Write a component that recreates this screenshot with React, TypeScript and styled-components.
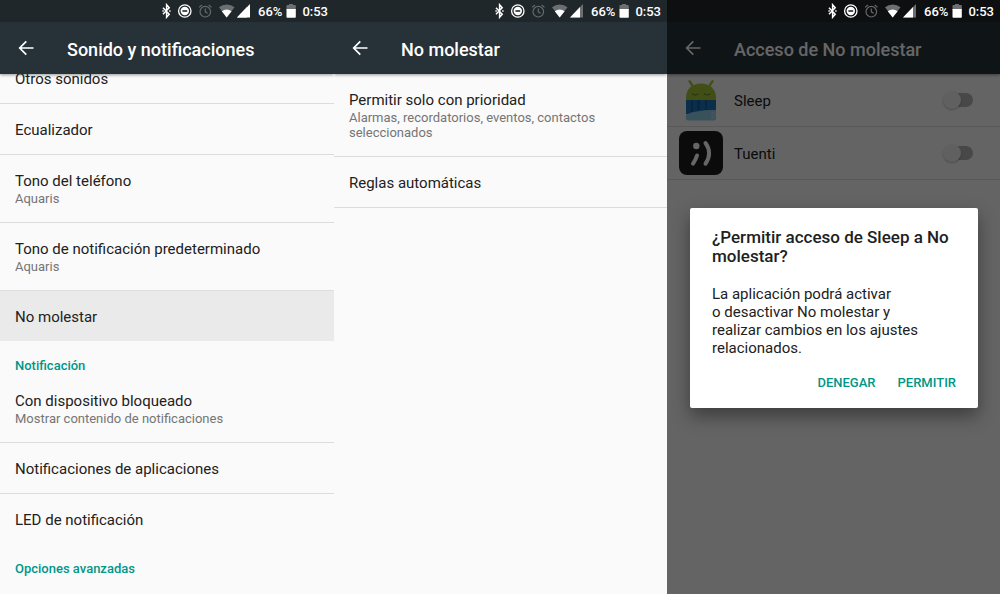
import React from "react";
import styled, { createGlobalStyle } from "styled-components";

const teal = "#009688";

const GlobalStyle = createGlobalStyle`
  *, *::before, *::after { box-sizing: border-box; }
  html, body, #root { height: 100%; }
  body {
    margin: 0;
    background: #fafafa;
    color: #212121;
    font-family: Roboto, "Liberation Sans", sans-serif;
  }
  button { font: inherit; color: inherit; border: 0; background: none; padding: 0; cursor: pointer; }
  h1, h2, p { margin: 0; padding: 0; }
`;

const Screens = styled.main`
  display: grid;
  grid-template-columns: 334fr 333fr 333fr;
  height: 100vh;
  overflow: hidden;
`;

const Phone = styled.section`
  position: relative;
  display: flex;
  flex-direction: column;
  min-width: 0;
  min-height: 0;
  overflow: hidden;
  background: #fafafa;
`;

const StatusBar = styled.div<{ $dim?: boolean }>`
  position: relative;
  z-index: 3;
  display: flex;
  flex: none;
  align-items: center;
  justify-content: flex-end;
  height: 22px;
  padding-right: 6px;
  background: ${(p) => (p.$dim ? "#0d0f11" : "#20272b")};
  color: #fff;
  font-size: 13px;
  font-weight: 500;
  line-height: 22px;

  svg { display: block; flex: none; }
`;

const StatusIcons = styled.span`
  display: flex;
  align-items: center;
  margin-right: 8px;
`;

const StatusText = styled.span`
  padding-top: 2px;
`;

const Battery = styled.svg`
  margin: 0 6px 0 4px;
`;

const AppBar = styled.header`
  position: relative;
  z-index: 1;
  display: flex;
  flex: none;
  align-items: center;
  height: 52px;
  padding: 4px 0 0 17px;
  background: #263238;
  color: #fff;
  box-shadow: 0 1px 3px rgba(0, 0, 0, 0.4);
`;

const BackButton = styled.button`
  display: flex;
  width: 18px;
  height: 18px;
  margin: 0 32px 4px 0;
`;

const Title = styled.h1`
  font-size: 18px;
  font-weight: 500;
  line-height: 24px;
  white-space: nowrap;
`;

const List = styled.div<{ $scrolled?: boolean }>`
  flex: 1;
  min-height: 0;
  margin-top: ${(p) => (p.$scrolled ? "-21px" : "0")};
`;

const Row = styled.button<{ $pressed?: boolean; $last?: boolean }>`
  display: block;
  width: 100%;
  padding: 16px 15px 14px;
  text-align: left;
  background: ${(p) => (p.$pressed ? "#eaeaea" : "transparent")};
  border-bottom: ${(p) => (p.$last ? "0" : "1px solid #dcdcdc")};
`;

const RowTitle = styled.span`
  display: block;
  font-size: 15px;
  line-height: 20px;
`;

const RowSummary = styled.span`
  display: block;
  padding-bottom: 2px;
  font-size: 13px;
  line-height: 15px;
  color: #757575;
`;

const Category = styled.h2`
  padding: 16px 15px 0;
  font-size: 13px;
  font-weight: 500;
  line-height: 18px;
  color: ${teal};
`;

const AppRow = styled.label`
  display: flex;
  align-items: center;
  height: 53px;
  padding: 2px 27px 0 12px;
  border-bottom: 1px solid #dcdcdc;
  font-size: 15px;
  line-height: 20px;

  svg { margin-bottom: 2px; }
`;

const AppName = styled.span`
  flex: 1;
  padding-left: 11px;
`;

const Switch = styled.input`
  position: relative;
  appearance: none;
  flex: none;
  width: 28px;
  height: 14px;
  margin: 0 0 2px;
  border-radius: 7px;
  background: #b4b4b4;

  &::before {
    content: "";
    position: absolute;
    top: -2px;
    left: -2px;
    width: 18px;
    height: 18px;
    border-radius: 50%;
    background: #f1f1f1;
    box-shadow: 0 1px 2px rgba(0, 0, 0, 0.25);
  }
`;

const Scrim = styled.div`
  position: absolute;
  inset: 0;
  z-index: 2;
  display: flex;
  align-items: center;
  padding: 22px 22px 0 23px;
  background: rgba(0, 0, 0, 0.6);
`;

const Dialog = styled.div`
  width: 100%;
  padding: 20px 22px 14px;
  border-radius: 2px;
  background: #fff;
  box-shadow: 0 8px 18px rgba(0, 0, 0, 0.4);
`;

const DialogTitle = styled.h2`
  font-size: 17px;
  font-weight: 500;
  line-height: 19px;
`;

const DialogText = styled.p`
  margin: 19px 20px 0 0;
  font-size: 15px;
  line-height: 18px;
`;

const Actions = styled.div`
  display: flex;
  justify-content: flex-end;
  gap: 22px;
  margin-top: 15px;
`;

const ActionButton = styled.button`
  font-size: 13px;
  font-weight: 500;
  line-height: 22px;
  color: ${teal};
`;

function Status({ dim, weakSignal }: { dim?: boolean; weakSignal?: boolean }) {
  return (
    <StatusBar $dim={dim}>
      <StatusIcons>
        <svg width="88" height="16" viewBox="0 0 88 16" fill="none" aria-hidden="true">
          <path d="M1 4.800 7.200 11.200 4.600 14.200V1.800L7.200 4.800 1 11.200" stroke="#fff" strokeWidth="1.500" />
          <path d="M.4 8h1.400M7.200 8h1.400" stroke="#fff" strokeWidth="1.600" />
          <circle cx="22.800" cy="8" r="6.200" stroke="#fff" strokeWidth="1.300" />
          <circle cx="22.800" cy="8" r="4.200" fill="#fff" />
          <path d="M20.400 8h4.800" stroke="#20272b" strokeWidth="1.600" />
          <g stroke="#63696d" strokeWidth="1.200">
            <circle cx="43.300" cy="8.700" r="5.300" />
            <path d="M43.300 5.500v3.300l2.300 1.400M37.100 4.400l2.800-2.400M49.500 4.400l-2.800-2.400" />
          </g>
          <path d="M57 4.200a12.600 12.600 0 0 1 15.500 0L64.700 14.500z" fill="#6b6f72" />
          <path d="M59.800 8.300a8 8 0 0 1 9.800 0L64.700 14.500z" fill="#fff" />
          <path d="M88 1v13.500H75z" fill={weakSignal ? "#6b6f72" : "#fff"} />
          <path d="M85 4.100v10.400H75z" fill="#fff" />
        </svg>
      </StatusIcons>
      <StatusText>66%</StatusText>
      <Battery width="10" height="14" viewBox="0 0 10 14" aria-hidden="true">
        <path d="M3 0h4v1h2a.8.8 0 0 1 .8.8V6H.5V1.800A.8.8 0 0 1 1.300 1H3z" fill="#6b6f72" />
        <path d="M.5 5h9.300v8a.8.8 0 0 1-.8.8H1.300A.8.8 0 0 1 .5 13z" fill="#fff" />
      </Battery>
      <StatusText>0:53</StatusText>
    </StatusBar>
  );
}

function Bar({ title }: { title: string }) {
  return (
    <AppBar>
      <BackButton type="button" aria-label="Atrás">
        <svg width="18" height="18" viewBox="0 0 18 18" fill="none" stroke="#fff" strokeWidth="1.700">
          <path d="M16.500 9H3M9.300 2.400 2.700 9l6.600 6.600" />
        </svg>
      </BackButton>
      <Title>{title}</Title>
    </AppBar>
  );
}

interface ItemProps {
  title: string;
  summary?: string;
  pressed?: boolean;
  last?: boolean;
}

function Item({ title, summary, pressed, last }: ItemProps) {
  return (
    <Row type="button" $pressed={pressed} $last={last}>
      <RowTitle>{title}</RowTitle>
      {summary && <RowSummary>{summary}</RowSummary>}
    </Row>
  );
}

function SleepIcon() {
  return (
    <svg width="44" height="44" viewBox="0 -1 44 44" fill="none" aria-hidden="true">
      <path d="M10.500 2.200 14 7.500M33.500 2.200 30 7.500" stroke="#a4c639" strokeWidth="2.400" strokeLinecap="round" />
      <path d="M7 22v-3.500C7 10 13.500 4.500 22 4.500S37 10 37 18.500V22z" fill="#a4c639" />
      <path d="M13 14.500c1.500 2 5 2 6.500 0M25 14.500c1.500 2 5 2 6.500 0" stroke="#5e7a1c" strokeWidth="1.200" />
      <path d="M7 21h30v14H7z" fill="#1c75bc" />
      <path d="M12 21h2v12h-2zM18 21h3v10h-3zM26 21h2v10h-2z" fill="#15609f" />
      <path d="M7 35.500c8-3.500 19-5 30-4.500v8.500a2 2 0 0 1-2 2H9a2 2 0 0 1-2-2z" fill="#8fcbe0" />
      <path d="M33 33.500c2-1 3 .5 3 2.500s-1 4-3 3.500z" stroke="#b9e2ef" />
    </svg>
  );
}

function TuentiIcon() {
  return (
    <svg width="44" height="44" viewBox="0 0 44 44" fill="none" aria-hidden="true">
      <rect width="44" height="44" rx="8" fill="#1c1c1c" />
      <circle cx="17.300" cy="15" r="3.200" fill="#fff" />
      <path d="M18 24.500c-.8 3-2.200 5.600-4 8.200M26.500 12c4.800 6.200 4.800 14.500 0 20.700" stroke="#fff" strokeWidth="4" strokeLinecap="round" />
    </svg>
  );
}

const permissionText =
  "La aplicación podrá activar o\u00a0desactivar No molestar y realizar cambios en los ajustes relacionados.";

export default function App() {
  return (
    <>
      <GlobalStyle />
      <Screens>
        <Phone>
          <Status />
          <Bar title="Sonido y notificaciones" />
          <List $scrolled>
            <Item title="Otros sonidos" />
            <Item title="Ecualizador" />
            <Item title="Tono del teléfono" summary="Aquaris" />
            <Item title="Tono de notificación predeterminado" summary="Aquaris" />
            <Item title="No molestar" pressed last />
            <Category>Notificación</Category>
            <Item title="Con dispositivo bloqueado" summary="Mostrar contenido de notificaciones" />
            <Item title="Notificaciones de aplicaciones" />
            <Item title="LED de notificación" last />
            <Category>Opciones avanzadas</Category>
          </List>
        </Phone>

        <Phone>
          <Status weakSignal />
          <Bar title="No molestar" />
          <List>
            <Item
              title="Permitir solo con prioridad"
              summary="Alarmas, recordatorios, eventos, contactos seleccionados"
            />
            <Item title="Reglas automáticas" />
          </List>
        </Phone>

        <Phone>
          <Status dim weakSignal />
          <Bar title="Acceso de No molestar" />
          <List>
            <AppRow>
              <SleepIcon />
              <AppName>Sleep</AppName>
              <Switch type="checkbox" role="switch" />
            </AppRow>
            <AppRow>
              <TuentiIcon />
              <AppName>Tuenti</AppName>
              <Switch type="checkbox" role="switch" />
            </AppRow>
          </List>
          <Scrim>
            <Dialog role="dialog" aria-modal="true" aria-labelledby="permission-title">
              <DialogTitle id="permission-title">¿Permitir acceso de Sleep a No molestar?</DialogTitle>
              <DialogText>{permissionText}</DialogText>
              <Actions>
                <ActionButton type="button">DENEGAR</ActionButton>
                <ActionButton type="button">PERMITIR</ActionButton>
              </Actions>
            </Dialog>
          </Scrim>
        </Phone>
      </Screens>
    </>
  );
}
